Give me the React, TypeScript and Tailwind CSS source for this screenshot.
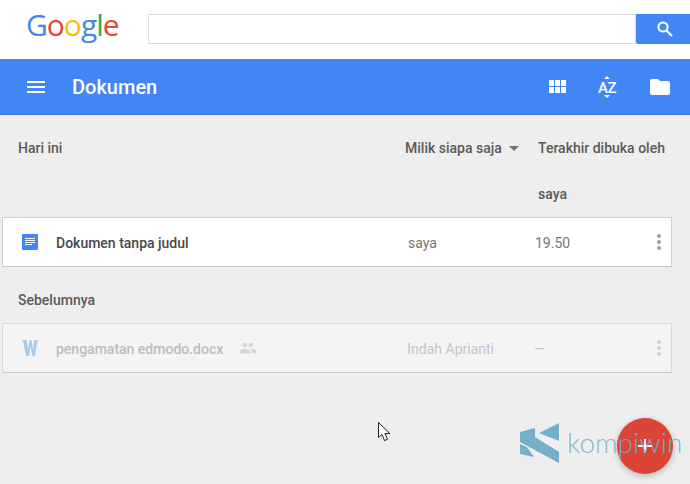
const font = { fontFamily: 'Roboto, sans-serif' };

function MoreDots({ faded }: { faded?: boolean }) {
  return (
    <div className={`flex flex-col gap-[2px] ${faded ? 'opacity-40' : ''}`}>
      <span className="h-[4px] w-[4px] rounded-full bg-[#9e9e9e]" />
      <span className="h-[4px] w-[4px] rounded-full bg-[#9e9e9e]" />
      <span className="h-[4px] w-[4px] rounded-full bg-[#9e9e9e]" />
    </div>
  );
}

function DocIcon() {
  return (
    <svg width="16" height="16" viewBox="0 0 16 16">
      <rect width="16" height="16" rx="1" fill="#4285f4" />
      <path d="M3 4h10v1H3zM3 6h10v1H3zM3 8h10v1H3zM3 10h7v1H3z" fill="#fff" />
    </svg>
  );
}

function WordIcon() {
  return (
    <svg width="16" height="16" viewBox="0 0 16 16">
      <path d="M0 0h5v1L6 10 7.5 0h2L11 10l1-9V0h4v1l-.8.2L13 16h-2.6L8.4 6 7 16H4.2L1 1.2 0 1z" fill="#a9cbea" />
    </svg>
  );
}

function PeopleIcon() {
  return (
    <svg width="18" height="18" viewBox="0 0 24 24" fill="#d6d6d6">
      <path d="M16 11c1.66 0 2.99-1.34 2.99-3S17.66 5 16 5s-3 1.34-3 3 1.34 3 3 3zm-8 0c1.66 0 2.99-1.34 2.99-3S9.66 5 8 5 5 6.34 5 8s1.34 3 3 3zm0 2c-2.33 0-7 1.17-7 3.5V19h14v-2.5C15 14.17 10.33 13 8 13zm8 0c-.29 0-.62.02-.97.05 1.16.84 1.97 1.97 1.97 3.45V19h6v-2.5c0-2.33-4.67-3.5-7-3.5z" />
    </svg>
  );
}

export default function App() {
  return (
    <div className="relative h-[484px] w-[690px] overflow-hidden bg-[#eeeeee]" style={font}>
      {/* top strip with logo and search */}
      <div className="flex h-[59px] items-start bg-white">
        <div
          className="ml-[26px] mt-[6px] w-[122px] text-[30px] font-medium leading-[38px] tracking-[-1px]"
          style={{ fontFamily: '"Open Sans", sans-serif' }}
        >
          <span className="text-[#4285f4]">G</span>
          <span className="text-[#ea4335]">o</span>
          <span className="text-[#fbbc05]">o</span>
          <span className="text-[#4285f4]">g</span>
          <span className="text-[#34a853]">l</span>
          <span className="text-[#ea4335]">e</span>
        </div>
        <div className="mt-[14px] flex h-[30px] flex-1">
          <div className="flex-1 border border-[#dcdcdc] bg-white" />
          <div className="flex w-[54px] items-center justify-center rounded-bl-[2px] bg-[#4285f4] pl-[4px]">
            <svg width="18" height="18" viewBox="0 0 18 18" fill="none" stroke="#fff">
              <circle cx="7" cy="7" r="4.6" strokeWidth="2" />
              <path d="M10.5 10.5l5.5 5.5" strokeWidth="2.2" />
            </svg>
          </div>
        </div>
      </div>

      {/* blue app bar */}
      <div className="flex h-[56px] items-center border-b border-[#3b78dc] bg-[#4285f4] text-white">
        <div className="ml-[27px] flex w-[18px] flex-col gap-[3px]">
          <span className="h-[2px] bg-white" />
          <span className="h-[2px] bg-white" />
          <span className="h-[2px] bg-white" />
        </div>
        <span className="ml-[27px] flex-1 pt-[1px] text-[20px] font-medium">Dokumen</span>
        <div className="grid w-[17px] grid-cols-3 gap-[1px]">
          {[0, 1, 2, 3, 4, 5].map((i) => (
            <span key={i} className="h-[6px] bg-white" />
          ))}
        </div>
        <svg className="ml-[31px]" width="20" height="24" viewBox="0 0 20 24" fill="#fff">
          <path d="M10 1l3 3H7zM10 23l-3-3h6z" />
          <text x="1" y="17.5" fontSize="15" fontWeight="500" fontFamily="Roboto, sans-serif" letterSpacing="-0.5">AZ</text>
        </svg>
        <svg className="ml-[33px] mr-[20px]" width="20" height="16" viewBox="0 0 20 16" fill="#fff">
          <path d="M2 0h6l2 2h8a2 2 0 0 1 2 2v10a2 2 0 0 1-2 2H2a2 2 0 0 1-2-2V2a2 2 0 0 1 2-2z" />
        </svg>
      </div>

      {/* column headers */}
      <div className="mt-[10px] flex text-[14px] font-medium leading-[46px] text-[#5a5a5a]">
        <span className="ml-[18px] w-[387px]">Hari ini</span>
        <span className="flex h-[46px] w-[133px] items-center">
          Milik siapa saja
          <span className="ml-[7px] h-0 w-0 border-x-[5px] border-t-[5px] border-x-transparent border-t-[#757575]" />
        </span>
        <span className="w-[130px]">Terakhir dibuka oleh saya</span>
      </div>

      {/* today */}
      <div className="ml-[2px] flex h-[50px] w-[670px] items-center border border-[#d0d0d0] border-b-[#c4c4c4] bg-white text-[14px]">
        <span className="ml-[19px] flex w-[34px]"><DocIcon /></span>
        <span className="w-[352px] pt-[2px] font-medium text-[#484848]">Dokumen tanpa judul</span>
        <span className="w-[127px] pt-[2px] text-[#757575]">saya</span>
        <span className="flex-1 pt-[2px] text-[#757575]">19.50</span>
        <span className="mr-[10px]"><MoreDots /></span>
      </div>

      <div className="ml-[18px] text-[14px] font-medium leading-[66px] text-[#5a5a5a]">Sebelumnya</div>

      {/* earlier */}
      <div className="-mt-[10px] ml-[2px] flex h-[50px] w-[670px] items-center border border-[#d8d8d8] border-b-[#c8c8c8] bg-[#f4f4f4] text-[14px]">
        <span className="ml-[19px] flex w-[34px]"><WordIcon /></span>
        <span className="pt-[2px] font-medium text-[#bdbdbd]">pengamatan edmodo.docx</span>
        <span className="ml-[16px] flex w-[168px]"><PeopleIcon /></span>
        <span className="w-[127px] pt-[2px] text-[#c4c4c4]">Indah Aprianti</span>
        <span className="flex-1 pt-[2px] text-[#c4c4c4]">—</span>
        <span className="mr-[10px]"><MoreDots faded /></span>
      </div>

      {/* floating add button */}
      <div className="absolute left-[617px] top-[418px] flex h-[56px] w-[56px] items-center justify-center rounded-full bg-[#db4437] shadow-[0_2px_6px_rgba(0,0,0,0.25)]">
        <span className="relative h-[14px] w-[14px]">
          <span className="absolute left-[6px] top-0 h-[14px] w-[2px] bg-white" />
          <span className="absolute left-0 top-[6px] h-[2px] w-[14px] bg-white" />
        </span>
      </div>

      {/* watermark */}
      <div className="absolute left-[520px] top-[422px] flex items-center">
        <svg width="40" height="42" viewBox="0 0 40 42" fill="#76afca">
          <path d="M0 10L15 6V15L39 30V41L0 20zM19 11L39 1V19zM0 22L7 25L14 35L0 32z" />
        </svg>
      </div>
      <span
        className="absolute left-[567px] top-[424px] text-[28px] font-light leading-[36px] text-[#76afca]/90"
        style={{ fontFamily: 'Lato, sans-serif' }}
      >
        kompiwin
      </span>

      {/* mouse pointer */}
      <svg className="absolute left-[378px] top-[422px]" width="13" height="20" viewBox="0 0 13 20">
        <path d="M.5.5v15l3.5-3 2.5 6 3-1.3-2.6-5.7h5z" fill="#fff" stroke="#222" strokeWidth="1" />
      </svg>
    </div>
  );
}
